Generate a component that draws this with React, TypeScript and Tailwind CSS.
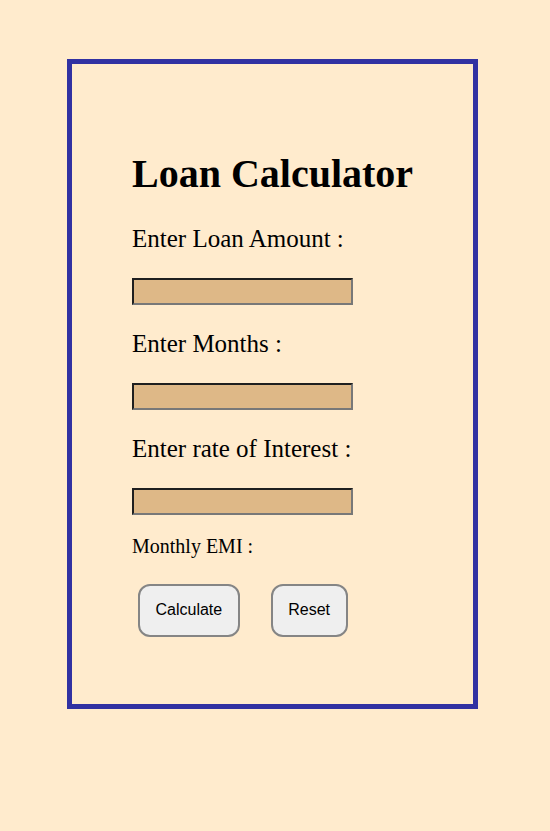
export default function App() {
  const serif = "font-['Liberation_Serif','Times_New_Roman',serif]"
  const fields = ["Enter Loan Amount :", "Enter Months :", "Enter rate of Interest :"]

  return (
    <div className="min-h-[831px] w-full bg-[#ffebcd] pt-[59px] pl-[67px]">
      <div className={`flex h-[650px] w-[411px] flex-col border-[5px] border-[#3131a2] pl-[60px] pt-[87px] text-black ${serif}`}>
        <h1 className="text-[40px] font-bold leading-[46px]">Loan Calculator</h1>

        <div className="mt-[27px] flex flex-col">
          {fields.map((label) => (
            <div key={label} className="flex flex-col">
              <label className="text-[25px] leading-[29px]">{label}</label>
              <input
                type="text"
                className="mt-[25px] mb-[24.5px] h-[26.5px] w-[221px] border-2 border-t-[#1f1f1f] border-l-[#1f1f1f] border-b-[#787878] border-r-[#787878] bg-[#deb887] outline-none"
              />
            </div>
          ))}
        </div>

        <p className="-mt-[4px] text-[20px] leading-[23px]">Monthly EMI :</p>

        <div className="mt-[26px] ml-[6px] flex gap-[31px] font-['Liberation_Sans',Arial,sans-serif] text-[16px]">
          <button className="h-[52.5px] rounded-[12px] border-2 border-[#858585] bg-[#efefef] px-[15.5px]">
            Calculate
          </button>
          <button className="h-[52.5px] rounded-[12px] border-2 border-[#858585] bg-[#efefef] px-[15.5px]">
            Reset
          </button>
        </div>
      </div>
    </div>
  )
}
